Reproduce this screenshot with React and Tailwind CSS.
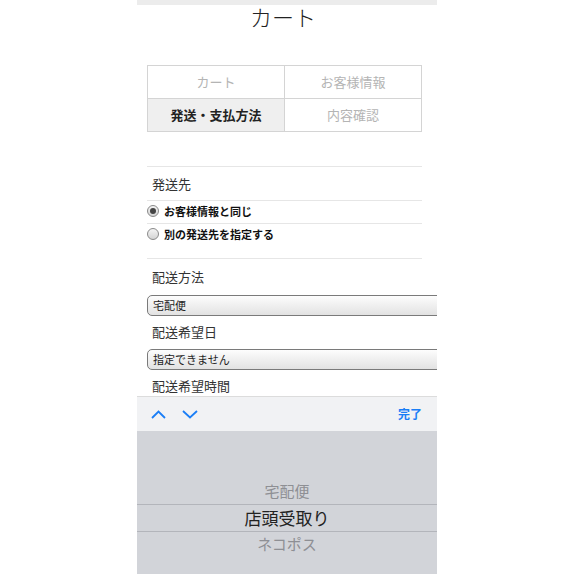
import React from "react";

const font = { fontFamily: '"Noto Sans CJK JP", "Noto Sans", sans-serif' };

const Radio = ({ checked }) => (
	<span className="flex h-[12px] w-[12px] items-center justify-center rounded-full border border-[#8a8a8a] bg-gradient-to-b from-[#f4f4f4] to-[#d4d4d4]">
		{checked && <span className="h-[6px] w-[6px] rounded-full bg-[#444]" />}
	</span>
);

const Select = ({ value }) => (
	<div className="flex h-[21px] w-[300px] items-center rounded-l-[5px] border border-[#7a7a7a] bg-gradient-to-b from-[#fdfdfd] to-[#e2e2e2] pl-[5px] text-[11px] text-[#222]">
		{value}
	</div>
);

const App = () => {
	return (
		<div className="flex h-[574px] w-full justify-center bg-white" style={font}>
			<div className="relative h-[574px] w-[300px] overflow-hidden bg-white">
				<div className="h-[5px] bg-[#ececec]" />

				{/* Title */}
				<h1 className="pr-[8px] text-center text-[22px] font-light leading-[22px] text-[#222]">
					カート
				</h1>

				<div className="pl-[10px] pr-[15px]">
					{/* Steps */}
					<div className="mt-[38px] grid grid-cols-2 border-l border-t border-[#d4d4d4] text-[13px]">
						<div className="flex h-[33px] items-center justify-center border-b border-r border-[#d4d4d4] text-[#b4b4b4]">
							カート
						</div>
						<div className="flex h-[33px] items-center justify-center border-b border-r border-[#d4d4d4] text-[#b4b4b4]">
							お客様情報
						</div>
						<div className="flex h-[33px] items-center justify-center border-b border-r border-[#d4d4d4] bg-[#efefef] font-bold text-[#222]">
							発送・支払方法
						</div>
						<div className="flex h-[33px] items-center justify-center border-b border-r border-[#d4d4d4] text-[#b4b4b4]">
							内容確認
						</div>
					</div>

					{/* Shipping address */}
					<div className="mt-[34px] h-px bg-[#e6e6e6]" />
					<div className="flex h-[33px] items-center pl-[5px] text-[13px] text-[#333]">
						発送先
					</div>
					<div className="h-px bg-[#e6e6e6]" />
					<div className="flex h-[22px] items-center gap-[5px] pb-[2px] text-[11px] font-bold text-[#111]">
						<Radio checked />
						お客様情報と同じ
					</div>
					<div className="h-px bg-[#e6e6e6]" />
					<div className="flex h-[22px] items-center gap-[5px] pb-[2px] text-[11px] font-bold text-[#111]">
						<Radio />
						別の発送先を指定する
					</div>
					<div className="mt-[12px] h-px bg-[#e6e6e6]" />

					{/* Delivery */}
					<div className="flex h-[35px] items-center pl-[5px] text-[13px] text-[#333]">
						配送方法
					</div>
					<div className="mt-px">
						<Select value="宅配便" />
					</div>
					<div className="flex h-[31px] items-center pl-[5px] text-[13px] text-[#333]">
						配送希望日
					</div>
					<div className="mt-[2px]">
						<Select value="指定できません" />
					</div>
					<div className="flex h-[32px] items-center pl-[5px] text-[13px] text-[#333]">
						配送希望時間
					</div>
				</div>

				{/* Keyboard picker */}
				<div className="absolute inset-x-0 bottom-0 h-[178px]">
					<div className="flex h-[35px] items-center border-t border-[#dcdcdc] bg-[#f1f2f4] pl-[14px] pr-[15px]">
						<svg width="15" height="9" viewBox="0 0 15 9" fill="none">
							<polyline points="1,8 7.5,1.5 14,8" stroke="#1a7ef6" strokeWidth="1.8" />
						</svg>
						<svg className="ml-[16px]" width="16" height="9" viewBox="0 0 16 9" fill="none">
							<polyline points="1,1 8,7.5 15,1" stroke="#1a7ef6" strokeWidth="1.8" />
						</svg>
						<span className="ml-auto text-[12px] font-bold text-[#1a7ef6]">完了</span>
					</div>
					<div className="h-[143px] bg-[#d2d4d9] pt-[47px] text-center">
						<div className="flex h-[26px] items-center justify-center text-[15px] text-[#8e8f94]">
							宅配便
						</div>
						<div className="flex h-[28px] items-center justify-center border-y border-[#b3b5bb] text-[17px] text-[#222]">
							店頭受取り
						</div>
						<div className="flex h-[24px] items-center justify-center text-[15px] text-[#8e8f94]">
							ネコポス
						</div>
					</div>
				</div>
			</div>
		</div>
	);
};

export default App;
